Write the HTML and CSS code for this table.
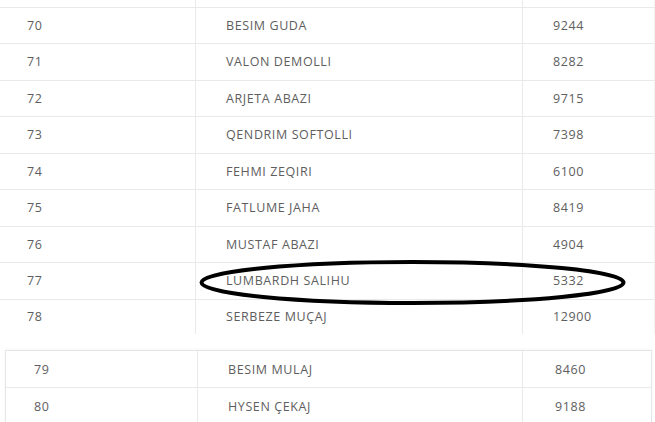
FILE: index.html
```html
<!DOCTYPE html>
<html>
<head>
<meta charset="utf-8">
<link rel="stylesheet" href="styles.css">
</head>
<body>
<div class="page">
  <div class="top">
    <div class="row stub"><div class="c1"></div><div class="c2"></div><div class="c3"></div></div>
    <div class="row"><div class="c1">70</div><div class="c2">BESIM GUDA</div><div class="c3">9244</div></div>
    <div class="row"><div class="c1">71</div><div class="c2">VALON DEMOLLI</div><div class="c3">8282</div></div>
    <div class="row"><div class="c1">72</div><div class="c2">ARJETA ABAZI</div><div class="c3">9715</div></div>
    <div class="row"><div class="c1">73</div><div class="c2">QENDRIM SOFTOLLI</div><div class="c3">7398</div></div>
    <div class="row"><div class="c1">74</div><div class="c2">FEHMI ZEQIRI</div><div class="c3">6100</div></div>
    <div class="row"><div class="c1">75</div><div class="c2">FATLUME JAHA</div><div class="c3">8419</div></div>
    <div class="row"><div class="c1">76</div><div class="c2">MUSTAF ABAZI</div><div class="c3">4904</div></div>
    <div class="row"><div class="c1">77</div><div class="c2">LUMBARDH SALIHU</div><div class="c3">5332</div></div>
    <div class="row last"><div class="c1">78</div><div class="c2">SERBEZE MUÇAJ</div><div class="c3">12900</div></div>
  </div>
  <div class="bottom">
    <div class="row"><div class="c1">79</div><div class="c2">BESIM MULAJ</div><div class="c3">8460</div></div>
    <div class="row"><div class="c1">80</div><div class="c2">HYSEN ÇEKAJ</div><div class="c3">9188</div></div>
  </div>
  <svg class="mark" width="655" height="422" viewBox="0 0 655 422">
    <ellipse cx="412.5" cy="282.5" rx="211" ry="20.5" fill="none" stroke="#000" stroke-width="4"/>
  </svg>
</div>
</body>
</html>
```

FILE: styles.css
```css
html, body {
  margin: 0;
  padding: 0;
  background: #fff;
}
.page {
  position: relative;
  width: 655px;
  height: 422px;
  overflow: hidden;
  font-family: "Open Sans", "Liberation Sans", sans-serif;
  font-size: 12.5px;
  letter-spacing: 0.6px;
  color: #5e5e5e;
}
.top {
  width: 655px;
  border-right: 1px solid #f3f3f3;
  box-sizing: border-box;
}
.row {
  display: flex;
  height: 36.5px;
  box-sizing: border-box;
  border-bottom: 1px solid #e9e9e9;
}
.row > div {
  display: flex;
  align-items: center;
  box-sizing: border-box;
}
.top .stub {
  height: 7.5px;
}
.top .c1 { width: 195px; padding-left: 27px; }
.top .c2 { width: 327px; padding-left: 30px; border-left: 1px solid #e9e9e9; }
.top .c3 { flex: 1; padding-left: 30px; border-left: 1px solid #e9e9e9; }
.top .last {
  border-bottom: none;
  height: 34px;
  align-items: stretch;
}
.bottom {
  margin: 16.5px 0 0 5px;
  width: 645px;
  border: 1px solid #e6e6e6;
  border-bottom: none;
  box-shadow: 0 -1px 3px rgba(0, 0, 0, 0.04);
}
.bottom .row { height: 37px; }
.bottom .row > div { padding-top: 1px; }
.bottom .c1 { width: 191px; padding-left: 28px; }
.bottom .c2 { width: 325px; padding-left: 30px; border-left: 1px solid #e9e9e9; }
.bottom .c3 { flex: 1; padding-left: 32px; border-left: 1px solid #e9e9e9; }
.mark {
  position: absolute;
  left: 0;
  top: 0;
  pointer-events: none;
}
```
